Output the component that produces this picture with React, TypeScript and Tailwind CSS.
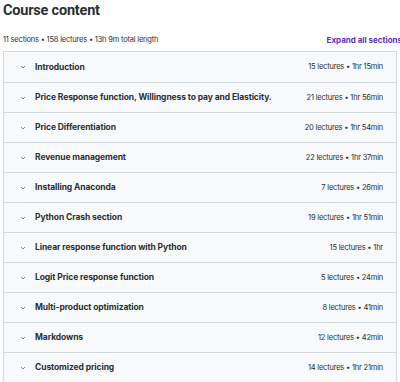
import { FC } from 'react'

const sections = [
  { title: 'Introduction', meta: '15 lectures • 1hr 15min' },
  { title: 'Price Response function, Willingness to pay and Elasticity.', meta: '21 lectures • 1hr 56min' },
  { title: 'Price Differentiation', meta: '20 lectures • 1hr 54min' },
  { title: 'Revenue management', meta: '22 lectures • 1hr 37min' },
  { title: 'Installing Anaconda', meta: '7 lectures • 26min' },
  { title: 'Python Crash section', meta: '19 lectures • 1hr 51min' },
  { title: 'Linear response function with Python', meta: '15 lectures • 1hr' },
  { title: 'Logit Price response function', meta: '5 lectures • 24min' },
  { title: 'Multi-product optimization', meta: '8 lectures • 41min' },
  { title: 'Markdowns', meta: '12 lectures • 42min' },
  { title: 'Customized pricing', meta: '14 lectures • 1hr 21min' },
]

const Chevron: FC = () => (
  <svg width="8" height="8" viewBox="0 0 24 24" fill="none" stroke="#6a6f73" strokeWidth="2.5" strokeLinecap="round" strokeLinejoin="round">
    <path d="M7 10l5 5 5-5" />
  </svg>
)

const App: FC = () => {
  return (
    <div className="w-[400px] h-[382px] bg-white overflow-hidden font-['Inter',sans-serif] text-[#2d2f31]">
      <div className="pl-[3px] pt-[1px]">
        <h2 className="font-['Roboto',sans-serif] font-bold text-[14.5px] leading-[20px] tracking-[-0.2px]">Course content</h2>
        <div className="flex items-center justify-between mt-[12px] h-[14px]">
          <span className="text-[7.5px] tracking-[-0.2px]">11 sections • 158 lectures • 13h 9m total length</span>
          <button className="text-[8px] font-bold text-[#5b2fcc] whitespace-nowrap -mr-[2px]">Expand all sections</button>
        </div>
      </div>
      <div className="mt-[4px] ml-[3px] w-[394px] border border-[#d1d7dc]">
        {sections.map((s, i) => (
          <div
            key={s.title}
            className={`flex items-center h-[30px] bg-[#f7f9fa] pl-[15px] pr-[13px] ${i > 0 ? 'border-t border-[#d1d7dc]' : ''}`}
          >
            <Chevron />
            <span className="ml-[8px] flex-1 font-bold text-[8.5px] tracking-[-0.1px] whitespace-nowrap">{s.title}</span>
            <span className="text-[7.5px] tracking-[-0.2px] whitespace-nowrap">{s.meta}</span>
          </div>
        ))}
      </div>
    </div>
  )
}

export default App
